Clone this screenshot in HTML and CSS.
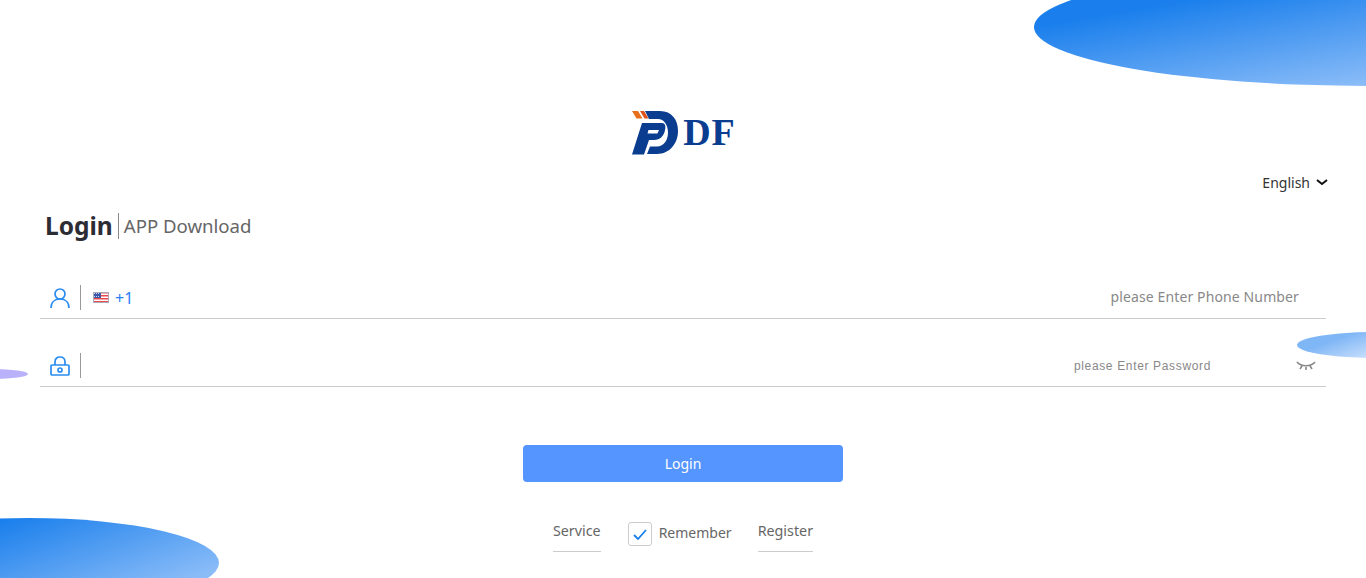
FILE: index.html
```html
<!DOCTYPE html>
<html>
	<head>
		<meta name="viewport" content="width=device-width, initial-scale=1.0" />
		<title>Login</title>
		<link rel="stylesheet" href="styles.css">
	</head>
	<body>
		<!-- background blobs -->
		<div class="bg">
			<div class="blob blob-top"></div>
			<div class="blob blob-bottom"></div>
			<div class="blob blob-right"></div>
			<div class="blob blob-left"></div>
		</div>

		<div class="page">
			<div class="logo">
				<svg class="logo-mark" viewBox="0 0 56 52" width="56" height="52">
					<path fill="#e8701a" d="M5 5H11L15.500 12.500H9.500Z" />
					<path fill="#e0521c" d="M13 5H17L21.500 12.500H17.500Z" />
					<path fill="#0a3d8f" d="M18 5H33C45 5 51 14 51 25C51 37 43 48 30 48H20L23 40.500H30C37 40.500 41 34 41 26.500C41 19 37 13 31 13H22Z" />
					<path fill="#0a3d8f" d="M15 17H35C38 17 39 20 38 24C37 30 33 34 27 34H22L17 48.500H5Z" />
					<path fill="#fff" d="M21.500 24H32L30.500 27.500H20.500Z" />
				</svg>
				<span class="logo-text">DF</span>
			</div>

			<div class="lang">
				<span>English</span>
				<svg viewBox="0 0 12 7" width="12" height="7">
					<path d="M1 1L6 5L11 1" fill="none" stroke="#111" stroke-width="2" />
				</svg>
			</div>

			<div class="tabs">
				<span class="tab-active">Login</span>
				<span class="tab">APP Download</span>
			</div>

			<div class="field field-phone">
				<svg class="field-icon" viewBox="0 0 20 20" width="20" height="20">
					<circle cx="10" cy="6" r="5" fill="none" stroke="#2b8cf0" stroke-width="1.7" />
					<path d="M1 20C1 14 5 11 10 11C15 11 19 14 19 20" fill="none" stroke="#2b8cf0" stroke-width="1.7" />
				</svg>
				<span class="field-line"></span>
				<svg class="flag" viewBox="0 0 16 11" width="16" height="11">
					<rect width="16" height="11" fill="#fff" />
					<path fill="#e8474c" d="M0 0H16V1.500H0ZM0 3H16V4.500H0ZM0 6H16V7.500H0ZM0 9H16V11H0Z" />
					<rect width="8" height="6" fill="#3a57a8" />
					<path stroke="#c9d3ee" stroke-width="1" stroke-dasharray="1 1" d="M1 1.500H7M1 4.500H7" />
				</svg>
				<span class="code">+1</span>
				<input class="input" type="text" placeholder="please Enter Phone Number" />
			</div>

			<div class="field field-password">
				<svg class="field-icon" viewBox="0 0 20 20" width="20" height="20">
					<path d="M5 9V6C5 3 7 1 10 1C13 1 15 3 15 6V9" fill="none" stroke="#2b8cf0" stroke-width="1.7" />
					<rect x="1" y="9" width="18" height="10" rx="1" fill="none" stroke="#2b8cf0" stroke-width="1.7" />
					<circle cx="10" cy="14" r="2" fill="none" stroke="#2b8cf0" stroke-width="1.7" />
				</svg>
				<span class="field-line"></span>
				<input class="input" type="password" placeholder="please Enter Password" />
				<svg class="eye" viewBox="0 0 20 10" width="20" height="10">
					<path d="M1 1C5 6 15 6 19 1M6 5L4 8M10 6V9M14 5L16 8" fill="none" stroke="#888" stroke-width="1.6" />
				</svg>
			</div>

			<button class="login-btn">Login</button>

			<div class="links">
				<a class="link">Service</a>
				<label class="remember">
					<span class="check">
						<svg viewBox="0 0 14 11" width="14" height="11">
							<path d="M1 6L5 10L13 1" fill="none" stroke="#1a7fec" stroke-width="1.8" />
						</svg>
					</span>
					<span class="remember-text">Remember</span>
				</label>
				<a class="link">Register</a>
			</div>
		</div>
	</body>
</html>
```

FILE: styles.css
```css
html,
body {
	margin: 0;
	height: 100%;
	overflow: hidden;
}

body {
	font-family: "Noto Sans", Arial, sans-serif;
	background-color: #fff;
	color: #333;
	position: relative;
}

.bg {
	position: absolute;
	top: 0;
	left: 0;
	right: 0;
	bottom: 0;
	overflow: hidden;
}

.blob {
	position: absolute;
	border-radius: 50%;
	filter: blur(0.5px);
}

.blob-top {
	left: 1034px;
	top: -32px;
	width: 672px;
	height: 118px;
	background: linear-gradient(170deg, #1a7fec 25%, #8abcf8 74%);
}

.blob-bottom {
	left: -161px;
	top: 518px;
	width: 380px;
	height: 90px;
	background: linear-gradient(160deg, #1a7fec 27%, #8abcf8 83%);
}

.blob-right {
	left: 1297px;
	top: 332px;
	width: 160px;
	height: 26px;
	background: linear-gradient(160deg, #7fb6f6 25%, #cfe3fc 65%);
}

.blob-left {
	left: -42px;
	top: 369px;
	width: 70px;
	height: 10px;
	background: #b9b2fb;
}

.page {
	position: relative;
	padding: 106px 40px 0;
}

.logo {
	display: flex;
	justify-content: center;
	align-items: center;
	height: 52px;
	padding-right: 3px;
}

.logo-text {
	font-family: "Liberation Serif", serif;
	font-weight: bold;
	font-size: 38px;
	line-height: 54px;
	letter-spacing: 1px;
	color: #0a3d8f;
}

.lang {
	display: flex;
	justify-content: flex-end;
	align-items: center;
	gap: 6px;
	height: 20px;
	margin-top: 14px;
	margin-right: -2px;
	font-size: 14px;
	color: #333;
}

.tabs {
	display: flex;
	align-items: center;
	height: 26px;
	margin-top: 21px;
	padding-left: 5px;
}

.tab-active {
	font-size: 24.5px;
	font-weight: bold;
	color: #2c2c34;
	padding-right: 5px;
	border-right: 1px solid #888;
	line-height: 26px;
}

.tab {
	font-size: 18.6px;
	color: #666;
	padding-left: 5px;
	margin-bottom: 2px;
}

.field {
	display: flex;
	align-items: center;
	box-sizing: border-box;
	padding: 0 10px;
	border-bottom: 1px solid #ccc;
}

.field-phone {
	margin-top: 39px;
	height: 41px;
	padding-bottom: 1px;
}

.field-password {
	height: 68px;
	padding-top: 33px;
	padding-bottom: 7px;
}

.field-line {
	width: 1px;
	height: 25px;
	background-color: #999;
	margin-left: 10px;
}

.flag {
	margin-left: 12px;
	outline: 1px solid #aab;
	outline-offset: -1px;
}

.code {
	margin-left: 6px;
	font-size: 16px;
	color: #2a7ff5;
}

.input {
	flex: 1;
	min-width: 0;
	border: none;
	outline: none;
	background: transparent;
	text-align: right;
	padding: 0;
}

.input::placeholder {
	color: #888;
	opacity: 1;
}

.field-phone .input {
	font-family: "Noto Sans", Arial, sans-serif;
	font-size: 14px;
	letter-spacing: 0.12px;
	padding-right: 17px;
	margin-bottom: 2px;
}

.field-password .input {
	font-family: "Liberation Sans", Arial, sans-serif;
	font-size: 12px;
	letter-spacing: 0.65px;
	padding-right: 85px;
}

.eye {
	flex: none;
}

.login-btn {
	display: block;
	width: 320px;
	height: 37px;
	margin: 58px auto 0;
	border: none;
	border-radius: 4px;
	background-color: #5595ff;
	color: #fff;
	font-family: "Noto Sans", Arial, sans-serif;
	font-size: 14px;
	cursor: pointer;
}

.links {
	display: flex;
	justify-content: center;
	align-items: flex-start;
	margin-top: 36px;
	font-size: 14px;
	color: #666;
}

.link {
	display: block;
	height: 33px;
	line-height: 26px;
	font-size: 14.3px;
	border-bottom: 1px solid #ccc;
}

.remember {
	display: flex;
	align-items: center;
	gap: 7px;
	height: 28px;
	margin: 2px 26px 0 27px;
}

.remember-text {
	margin-bottom: 4px;
}

.check {
	display: flex;
	justify-content: center;
	align-items: center;
	box-sizing: border-box;
	width: 24px;
	height: 24px;
	border: 1px solid #ccc;
	border-radius: 3px;
}
```
